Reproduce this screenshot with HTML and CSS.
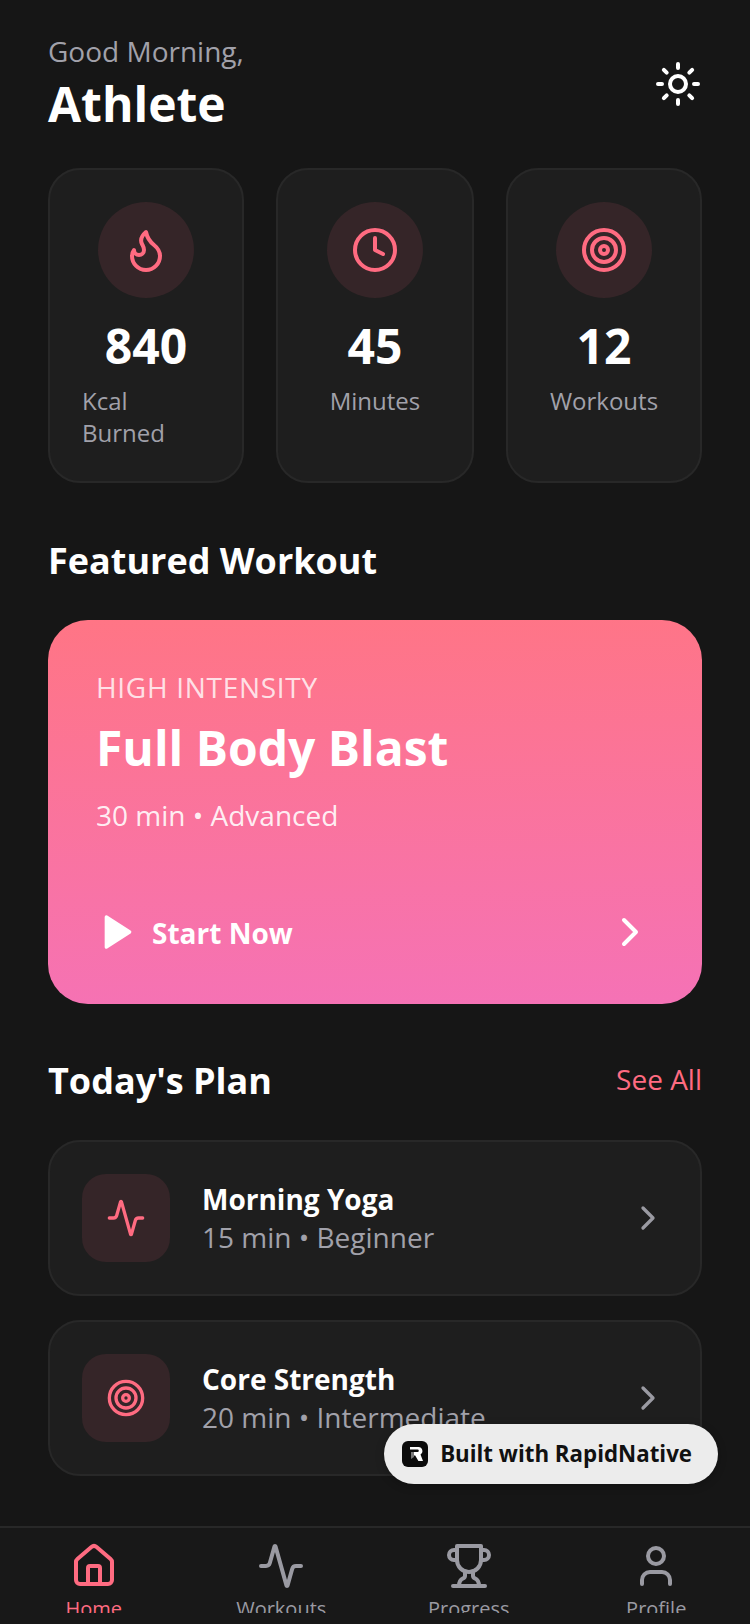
FILE: index.html
```html
<!DOCTYPE html>
<html lang="en">
<head>
  <meta charset="UTF-8">
  <title>Home</title>
  <link rel="stylesheet" href="styles.css">
</head>
<body>
  <div class="screen">
    <main class="content">
      <header class="header">
        <div>
          <p class="greeting">Good Morning,</p>
          <h1 class="name">Athlete</h1>
        </div>
        <svg class="icon icon-48 icon-white" viewBox="0 0 24 24"><circle cx="12" cy="12" r="4"/><path d="M12 2v2M12 20v2M4.93 4.93l1.41 1.41M17.66 17.66l1.41 1.41M2 12h2M20 12h2M6.34 17.66l-1.41 1.41M19.07 4.93l-1.41 1.41"/></svg>
      </header>

      <section class="stats">
        <div class="stat-card">
          <div class="stat-icon">
            <svg class="icon icon-48 icon-pink" viewBox="0 0 24 24"><path d="M8.5 14.5A2.5 2.5 0 0 0 11 12c0-1.38-.5-2-1-3-1.072-2.143-.224-4.054 2-6 .5 2.5 2 4.9 4 6.5 2 1.6 3 3.5 3 5.5a7 7 0 1 1-14 0c0-1.153.433-2.294 1-3a2.5 2.5 0 0 0 2.5 2.5z"/></svg>
          </div>
          <div class="stat-value">840</div>
          <div class="stat-label">Kcal Burned</div>
        </div>
        <div class="stat-card">
          <div class="stat-icon">
            <svg class="icon icon-48 icon-pink" viewBox="0 0 24 24"><circle cx="12" cy="12" r="10"/><path d="M12 6v6l4 2"/></svg>
          </div>
          <div class="stat-value">45</div>
          <div class="stat-label">Minutes</div>
        </div>
        <div class="stat-card">
          <div class="stat-icon">
            <svg class="icon icon-48 icon-pink" viewBox="0 0 24 24"><circle cx="12" cy="12" r="10"/><circle cx="12" cy="12" r="6"/><circle cx="12" cy="12" r="2"/></svg>
          </div>
          <div class="stat-value">12</div>
          <div class="stat-label">Workouts</div>
        </div>
      </section>

      <h2 class="section-title featured-heading">Featured Workout</h2>
      <section class="featured">
        <p class="featured-tag">HIGH INTENSITY</p>
        <h3 class="featured-title">Full Body Blast</h3>
        <p class="featured-meta">30 min • Advanced</p>
        <div class="featured-action">
          <div class="start">
            <svg class="icon icon-40 icon-white icon-fill" viewBox="0 0 24 24"><polygon points="5 3 19 12 5 21 5 3"/></svg>
            <span class="start-text">Start Now</span>
          </div>
          <svg class="icon icon-48 icon-white" viewBox="0 0 24 24"><path d="m9 18 6-6-6-6"/></svg>
        </div>
      </section>

      <div class="section-head">
        <h2 class="section-title">Today's Plan</h2>
        <span class="see-all">See All</span>
      </div>
      <section class="plan">
        <div class="plan-item">
          <div class="plan-icon">
            <svg class="icon icon-40 icon-pink" viewBox="0 0 24 24"><path d="M22 12h-2.48a2 2 0 0 0-1.93 1.46l-2.35 8.36a.25.25 0 0 1-.48 0L9.24 2.18a.25.25 0 0 0-.48 0l-2.35 8.36A2 2 0 0 1 4.49 12H2"/></svg>
          </div>
          <div class="plan-text">
            <div class="plan-title">Morning Yoga</div>
            <div class="plan-meta">15 min • Beginner</div>
          </div>
          <svg class="icon icon-40 icon-gray" viewBox="0 0 24 24"><path d="m9 18 6-6-6-6"/></svg>
        </div>
        <div class="plan-item">
          <div class="plan-icon">
            <svg class="icon icon-40 icon-pink" viewBox="0 0 24 24"><circle cx="12" cy="12" r="10"/><circle cx="12" cy="12" r="6"/><circle cx="12" cy="12" r="2"/></svg>
          </div>
          <div class="plan-text">
            <div class="plan-title">Core Strength</div>
            <div class="plan-meta">20 min • Intermediate</div>
          </div>
          <svg class="icon icon-40 icon-gray" viewBox="0 0 24 24"><path d="m9 18 6-6-6-6"/></svg>
        </div>
      </section>
    </main>

    <nav class="tabbar">
      <div class="tabs">
        <div class="tab tab-active">
          <svg class="icon icon-48" viewBox="0 0 24 24"><path d="M15 21v-8a1 1 0 0 0-1-1h-4a1 1 0 0 0-1 1v8"/><path d="M3 10a2 2 0 0 1 .709-1.528l7-5.999a2 2 0 0 1 2.582 0l7 5.999A2 2 0 0 1 21 10v9a2 2 0 0 1-2 2H5a2 2 0 0 1-2-2z"/></svg>
          <span class="tab-label">Home</span>
        </div>
        <div class="tab">
          <svg class="icon icon-48" viewBox="0 0 24 24"><path d="M22 12h-2.48a2 2 0 0 0-1.93 1.46l-2.35 8.36a.25.25 0 0 1-.48 0L9.24 2.18a.25.25 0 0 0-.48 0l-2.35 8.36A2 2 0 0 1 4.49 12H2"/></svg>
          <span class="tab-label">Workouts</span>
        </div>
        <div class="tab">
          <svg class="icon icon-48" viewBox="0 0 24 24"><path d="M6 9H4.5a2.5 2.5 0 0 1 0-5H6"/><path d="M18 9h1.5a2.5 2.5 0 0 0 0-5H18"/><path d="M4 22h16"/><path d="M10 14.66V17c0 .55-.47.98-.97 1.21C7.85 18.75 7 20.24 7 22"/><path d="M14 14.66V17c0 .55.47.98.97 1.21C16.15 18.75 17 20.24 17 22"/><path d="M18 2H6v7a6 6 0 0 0 12 0V2Z"/></svg>
          <span class="tab-label">Progress</span>
        </div>
        <div class="tab">
          <svg class="icon icon-48" viewBox="0 0 24 24"><path d="M19 21v-2a4 4 0 0 0-4-4H9a4 4 0 0 0-4 4v2"/><circle cx="12" cy="7" r="4"/></svg>
          <span class="tab-label">Profile</span>
        </div>
      </div>
    </nav>

    <div class="built-badge">
      <svg class="badge-logo" viewBox="0 0 26 26"><rect width="26" height="26" rx="6" fill="#0b0b0b"/><path d="M8 6h8.5a4 4 0 0 1 2 7.4L21 20h-4.6l-3.2-5.6H10V11h5.6a1.2 1.2 0 0 0 0-2.4H8z" fill="#fff"/><path d="M9 11h3v5l-3 2z" fill="#777"/></svg>
      <span class="badge-text">Built with RapidNative</span>
    </div>
  </div>
</body>
</html>
```

FILE: styles.css
```css
* {
  box-sizing: border-box;
}
html, body {
  margin: 0;
  padding: 0;
}
body {
  font-family: "Open Sans", sans-serif;
  background-color: #161616;
  color: #fff;
}
p, h1, h2, h3 {
  margin: 0;
}
.screen {
  position: relative;
  width: 750px;
  height: 1624px;
  overflow: hidden;
  display: flex;
  flex-direction: column;
}
.content {
  flex: 1;
  padding: 32px 48px 0;
}

.icon {
  display: block;
  flex-shrink: 0;
  fill: none;
  stroke: currentColor;
  stroke-width: 2;
  stroke-linecap: round;
  stroke-linejoin: round;
}
.icon-48 {
  width: 48px;
  height: 48px;
}
.icon-40 {
  width: 40px;
  height: 40px;
}
.icon-white {
  color: #fff;
}
.icon-pink {
  color: #ff6b81;
}
.icon-gray {
  color: #9a9aa2;
}
.icon-fill {
  fill: currentColor;
}

.header {
  display: flex;
  justify-content: space-between;
  align-items: center;
}
.greeting {
  font-size: 28px;
  line-height: 38px;
  color: #a1a1aa;
}
.name {
  margin-top: 2px;
  font-size: 48px;
  line-height: 64px;
  font-weight: 700;
}

.stats {
  display: grid;
  grid-template-columns: 196px 198px 196px;
  gap: 32px;
  margin-top: 32px;
}
.stat-card {
  display: flex;
  flex-direction: column;
  align-items: center;
  padding: 32px;
  background-color: #1e1e1e;
  border: 2px solid #282828;
  border-radius: 32px;
}
.stat-icon {
  width: 96px;
  height: 96px;
  border-radius: 50%;
  display: flex;
  align-items: center;
  justify-content: center;
  background-color: #352528;
}
.stat-value {
  margin-top: 16px;
  font-size: 48px;
  line-height: 64px;
  font-weight: 700;
}
.stat-label {
  margin-top: 7px;
  font-size: 24px;
  line-height: 32px;
  color: #a1a1aa;
}

.section-title {
  font-size: 36px;
  line-height: 56px;
  font-weight: 700;
}
.featured-heading {
  margin-top: 50px;
}
.section-head {
  display: flex;
  justify-content: space-between;
  align-items: center;
  height: 56px;
  margin-top: 48px;
}
.section-head .section-title {
  padding-top: 2px;
  line-height: 54px;
}
.see-all {
  margin-bottom: 2px;
  font-size: 28px;
  color: #ff6b81;
}

.featured {
  margin-top: 31px;
  height: 384px;
  padding: 48px;
  border-radius: 40px;
  background: linear-gradient(178deg, #ff7585, #f572b6);
}
.featured-tag {
  font-size: 28px;
  line-height: 38px;
  letter-spacing: 0.7px;
  color: rgba(255, 255, 255, 0.8);
}
.featured-title {
  margin-top: 10px;
  font-size: 48px;
  line-height: 64px;
  font-weight: 700;
}
.featured-meta {
  margin-top: 16px;
  font-size: 28px;
  line-height: 38px;
  color: rgba(255, 255, 255, 0.9);
}
.featured-action {
  display: flex;
  justify-content: space-between;
  align-items: center;
  margin-top: 74px;
}
.start {
  display: flex;
  align-items: center;
  gap: 14px;
  padding-left: 2px;
}
.start-text {
  padding-top: 2px;
  font-size: 28px;
  font-weight: 700;
}

.plan {
  display: flex;
  flex-direction: column;
  gap: 24px;
  margin-top: 32px;
}
.plan-item {
  display: flex;
  align-items: center;
  padding: 32px;
  background-color: #1e1e1e;
  border: 2px solid #282828;
  border-radius: 32px;
}
.plan-icon {
  width: 88px;
  height: 88px;
  border-radius: 24px;
  display: flex;
  align-items: center;
  justify-content: center;
  background-color: #352528;
}
.plan-text {
  flex: 1;
  margin-left: 32px;
  padding-bottom: 2px;
}
.plan-title {
  font-size: 28px;
  line-height: 40px;
  font-weight: 700;
}
.plan-meta {
  font-size: 28px;
  line-height: 36px;
  color: #a1a1aa;
}

.tabbar {
  height: 98px;
  background-color: #181818;
  border-top: 2px solid #282828;
}
.tabs {
  display: flex;
  height: 85px;
  padding-top: 14px;
  overflow: hidden;
}
.tab {
  flex: 1;
  display: flex;
  flex-direction: column;
  align-items: center;
  color: #9a9aa2;
}
.tab-active {
  color: #ff6b81;
}
.tab-label {
  margin-top: 7px;
  font-size: 20px;
  line-height: 24px;
}

.built-badge {
  position: absolute;
  right: 32px;
  bottom: 140px;
  height: 60px;
  display: flex;
  align-items: center;
  gap: 12px;
  padding: 0 26px 0 18px;
  background-color: #ececec;
  border-radius: 30px;
  box-shadow: 0 2px 8px rgba(0, 0, 0, 0.25);
}
.badge-logo {
  width: 26px;
  height: 26px;
}
.badge-text {
  padding-bottom: 2px;
  font-size: 22.3px;
  font-weight: 700;
  color: #111;
}
```
